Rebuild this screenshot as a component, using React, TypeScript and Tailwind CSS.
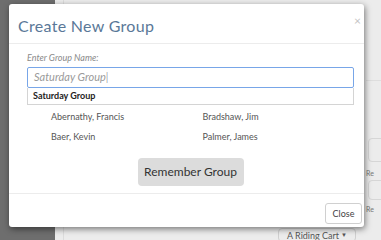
export default function App() {
  return (
    <div className="relative w-[381px] h-[240px] overflow-hidden bg-[#ececec] font-['Lato','Liberation_Sans',sans-serif]">
      {/* page behind the modal */}
      <div className="absolute inset-y-0 left-0 w-[55px] bg-[#6e6e6e]" />
      <div className="absolute inset-y-0 left-[63px] w-px bg-[#dcdcdc]" />
      <div className="absolute left-[366px] top-[80px] w-[20px] h-px bg-[#dedede]" />
      <div className="absolute left-[368px] top-[138px] w-[20px] h-[24px] border border-[#d6d6d6] rounded-sm" />
      <div className="absolute left-[366px] top-[168px] text-[7px] text-[#777]">Re</div>
      <div className="absolute left-[368px] top-[180px] w-[20px] h-[20px] border border-[#d6d6d6] rounded-sm" />
      <div className="absolute left-[366px] top-[204px] text-[7px] text-[#777]">Re</div>
      <div className="absolute left-[278px] top-[228px] w-[78px] h-[14px] border border-[#cfcfcf] rounded-sm flex items-center justify-between px-2 text-[9px] leading-none text-[#555]">
        <span>A Riding Cart</span>
        <span className="text-[6px]">▼</span>
      </div>

      {/* modal */}
      <div className="absolute left-[9px] top-[4px] w-[355px] h-[223px] bg-white rounded-[3px] shadow-[1px_2px_6px_rgba(0,0,0,0.5)] flex flex-col">
        <div className="h-[40px] flex items-center justify-between pl-[9px] pr-[3px] border-b border-[#ececec]">
          <h4 className="text-[16px] text-[#5a7898] tracking-[0.3px] mt-[4px]">Create New Group</h4>
          <span className="self-start mt-[11px] text-[12px] text-[#c4c4c4] leading-none">×</span>
        </div>

        <div className="flex-1 pl-[18px] pr-[10px] pt-[7px] flex flex-col">
          <label className="text-[9px] italic text-[#8a8a8a]">Enter Group Name:</label>
          <div className="mt-[2px]">
            <div className="h-[21px] border border-[#78a6e8] rounded-[2px] flex items-center px-[6px] text-[11px] italic text-[#9a9a9a]">
              Saturday Group<span className="not-italic text-[#555] font-light">|</span>
            </div>
            <div className="h-[17px] border border-t-0 border-[#d4d4d4] flex items-center px-[5px] text-[9px] font-bold text-[#222]">
              Saturday Group
            </div>
          </div>

          <div className="grid grid-cols-2 pl-[24px] pt-[5px] gap-y-[7px] text-[9px] text-[#555]">
            <span>Abernathy, Francis</span>
            <span>Bradshaw, Jim</span>
            <span>Baer, Kevin</span>
            <span>Palmer, James</span>
          </div>

          <div className="flex justify-center pt-[14px]">
            <button className="w-[106px] h-[28px] rounded-[4px] bg-[#dcdcdc] text-[12px] text-[#333]">
              Remember Group
            </button>
          </div>
        </div>

        <div className="h-[34px] border-t border-[#ececec] flex items-end justify-end pr-[2px] pb-[3px]">
          <button className="w-[37px] h-[21px] border border-[#d0d0d0] rounded-[3px] bg-white text-[9px] text-[#444]">
            Close
          </button>
        </div>
      </div>
    </div>
  );
}
